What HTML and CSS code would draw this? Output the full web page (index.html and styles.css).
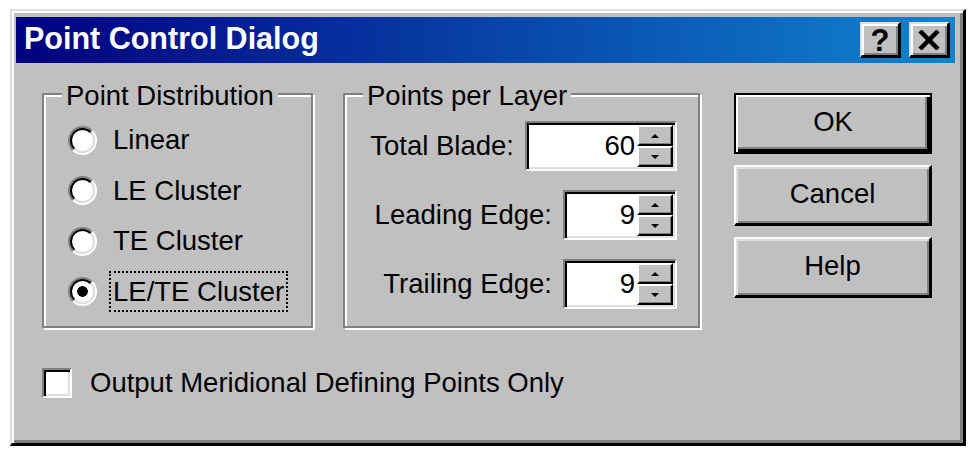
FILE: index.html
```html
<!DOCTYPE html>
<html>
<head>
<meta charset="utf-8">
<link rel="stylesheet" href="styles.css">
</head>
<body>
<div class="window">
  <div class="titlebar">
    <span class="title">Point Control Dialog</span>
    <div class="caption-btns">
      <div class="cbtn help">?</div>
      <div class="cbtn close">
        <svg width="22" height="20" viewBox="0 0 22 20"><path d="M2 1 L20 19 M20 1 L2 19" stroke="#000" stroke-width="4.5" fill="none"/></svg>
      </div>
    </div>
  </div>
  <div class="content">
    <div class="main">
      <fieldset class="group dist">
        <legend>Point Distribution</legend>
        <div class="radios">
          <div class="radio-row"><span class="radio"></span><span>Linear</span></div>
          <div class="radio-row"><span class="radio"></span><span>LE Cluster</span></div>
          <div class="radio-row"><span class="radio"></span><span>TE Cluster</span></div>
          <div class="radio-row"><span class="radio checked"></span><span class="focus">LE/TE Cluster</span></div>
        </div>
      </fieldset>
      <fieldset class="group ppl">
        <legend>Points per Layer</legend>
        <div class="rows">
          <div class="field-row"><span>Total Blade:</span>
            <div class="spin wide"><span class="val">60</span><div class="arrows"><span class="up"></span><span class="down"></span></div></div>
          </div>
          <div class="field-row"><span>Leading Edge:</span>
            <div class="spin"><span class="val">9</span><div class="arrows"><span class="up"></span><span class="down"></span></div></div>
          </div>
          <div class="field-row"><span>Trailing Edge:</span>
            <div class="spin"><span class="val">9</span><div class="arrows"><span class="up"></span><span class="down"></span></div></div>
          </div>
        </div>
      </fieldset>
      <div class="buttons">
        <div class="btn default">OK</div>
        <div class="btn">Cancel</div>
        <div class="btn">Help</div>
      </div>
    </div>
    <div class="check-row"><span class="checkbox"></span><span>Output Meridional Defining Points Only</span></div>
  </div>
</div>
</body>
</html>
```
FILE: styles.css
```css
* { box-sizing: border-box; }
body {
  margin: 0;
  background: #fff;
  font-family: "Liberation Sans", Arial, sans-serif;
  font-size: 27.5px;
  color: #000;
}
.window {
  width: 956px;
  height: 437px;
  margin: 9px 0 0 10px;
  background: #c0c0c0;
  border-style: solid;
  border-width: 2px 3px 3px 2px;
  border-color: #dfdfdf #000 #000 #dfdfdf;
  box-shadow: inset 2px 2px #fff, inset -3px -3px #808080;
  padding: 6px 8px 0 4px;
  display: flex;
  flex-direction: column;
}
.titlebar {
  flex: none;
  height: 46px;
  display: flex;
  align-items: center;
  justify-content: space-between;
  padding: 0 5px 0 8px;
  background: linear-gradient(90deg, #000080, #1084d0);
}
.title {
  color: #fff;
  font-weight: bold;
  font-size: 30.5px;
  line-height: 1;
  padding-bottom: 4px;
}
.caption-btns { display: flex; gap: 8px; }
.cbtn {
  width: 41px;
  height: 36px;
  background: #c0c0c0;
  border-style: solid;
  border-width: 2px 3px 3px 2px;
  border-color: #dfdfdf #000 #000 #dfdfdf;
  box-shadow: inset 2px 2px #fff, inset -2px -2px #808080;
  display: flex;
  align-items: center;
  justify-content: center;
}
.cbtn.help {
  font-weight: bold;
  font-size: 31px;
  line-height: 1;
  padding-top: 1px;
}
.content { flex: 1; padding: 14px 0 0 26px; }
.main { display: flex; align-items: flex-start; }
.group {
  margin: 0;
  padding: 0;
  min-inline-size: 0;
  height: 251px;
  border: 2px solid #808080;
  box-shadow: inset 2px 2px #fff, 2px 2px #fff;
}
legend {
  margin-left: 18px;
  padding: 5px 4px 0;
  line-height: 28px;
  background: #c0c0c0;
}
.group.dist { width: 271px; }
.radios { padding: 4.7px 0 0 24px; }
.radio-row {
  height: 50.67px;
  display: flex;
  align-items: center;
  gap: 16px;
}
.radio {
  flex: none;
  width: 29px;
  height: 29px;
  border-radius: 50%;
  border: 2px solid;
  border-color: #808080 #fff #fff #808080;
  display: flex;
}
.radio::before {
  content: "";
  flex: 1;
  border-radius: 50%;
  border: 2px solid;
  border-color: #000 #dfdfdf #dfdfdf #000;
  background: #fff;
}
.radio.checked::before {
  background: radial-gradient(circle, #000 0 5px, #fff 5.6px);
}
.focus {
  margin-left: -4px;
  padding: 0 2px;
  line-height: 37px;
  border: 2px dotted #000;
}
.group.ppl { width: 357px; margin-left: 30px; }
.rows {
  padding: 11px 21px 0 0;
  display: flex;
  flex-direction: column;
  align-items: flex-end;
  gap: 19px;
}
.field-row {
  height: 50px;
  display: flex;
  align-items: center;
  gap: 11px;
}
.spin {
  width: 114px;
  height: 50px;
  background: #fff;
  border-style: solid;
  border-width: 2px;
  border-color: #808080 #fff #fff #808080;
  box-shadow: inset 2px 2px #000, inset -2px -2px #dfdfdf;
  padding: 2px;
  display: flex;
}
.spin.wide { width: 152px; }
.val {
  flex: 1;
  text-align: right;
  padding-right: 2px;
  line-height: 42px;
}
.arrows {
  width: 36px;
  display: flex;
  flex-direction: column;
}
.arrows span {
  flex: 1;
  background: #c0c0c0;
  border-style: solid;
  border-width: 2px;
  border-color: #fff #000 #000 #fff;
  box-shadow: inset -1px -1px #808080;
  display: flex;
  align-items: center;
  justify-content: center;
}
.arrows span::before {
  content: "";
  width: 0;
  height: 0;
  border-left: 4px solid transparent;
  border-right: 4px solid transparent;
}
.arrows .up::before { border-bottom: 4px solid #000; }
.arrows .down::before { border-top: 4px solid #000; }
.buttons {
  width: 198px;
  margin: 16px 0 0 34px;
  display: flex;
  flex-direction: column;
  gap: 11px;
}
.btn {
  height: 61px;
  display: flex;
  align-items: center;
  justify-content: center;
  padding-bottom: 3px;
  background: #c0c0c0;
  border-style: solid;
  border-width: 2px 3px 3px 2px;
  border-color: #fff #000 #000 #fff;
  box-shadow: inset 2px 2px #dfdfdf, inset -2px -2px #808080;
}
.btn.default {
  border: 2px solid #000;
  box-shadow: inset 2px 2px #fff, inset -3px -3px #000, inset -5px -5px #808080;
}
.check-row {
  margin-top: 40px;
  height: 30px;
  display: flex;
  align-items: center;
  gap: 18px;
}
.checkbox {
  flex: none;
  width: 30px;
  height: 30px;
  background: #fff;
  border: 2px solid;
  border-color: #808080 #fff #fff #808080;
  box-shadow: inset 2px 2px #000, inset -2px -2px #dfdfdf;
}
```
